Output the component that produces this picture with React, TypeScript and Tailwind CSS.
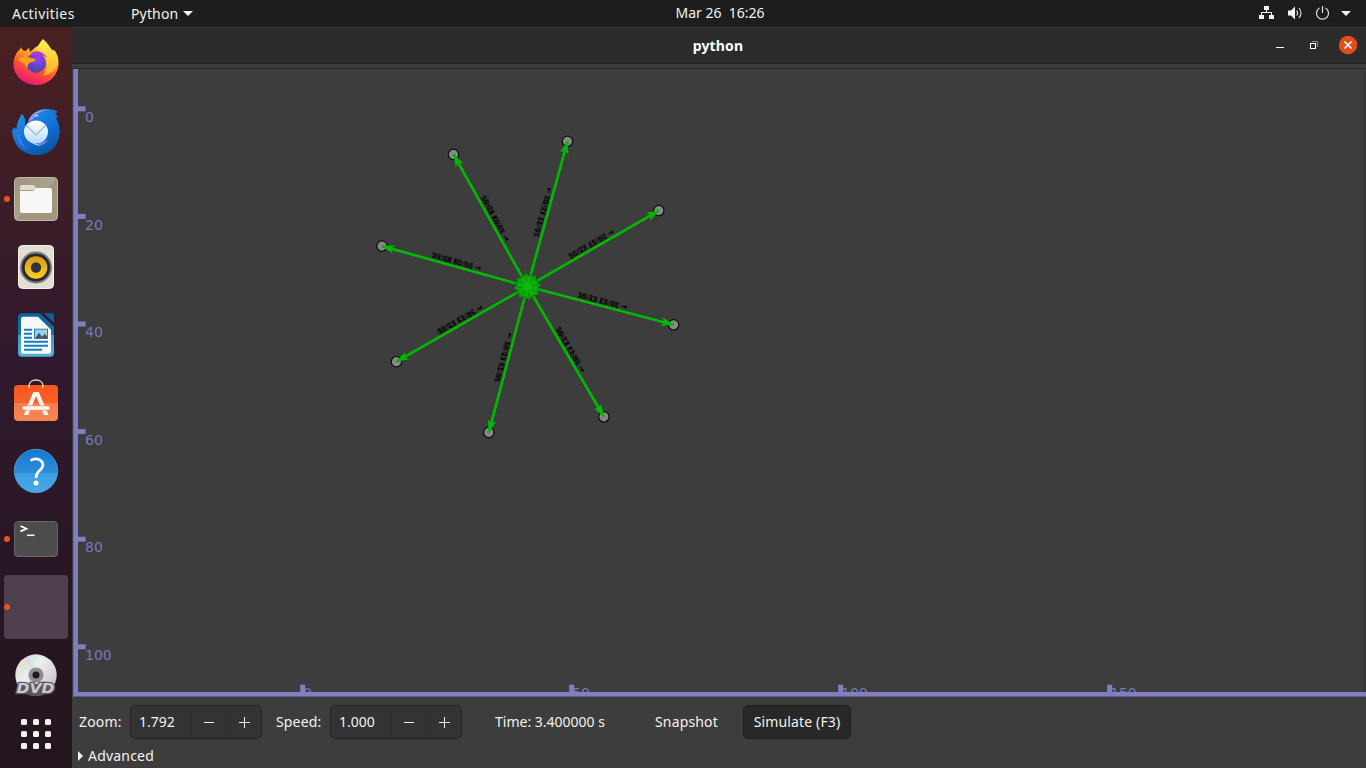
import React from "react";

const HUB = { x: 527.5, y: 286.5 };
const NODES = [
  { x: 567.5, y: 141.3, rate: "26.37 Kbit/s" },
  { x: 658.8, y: 210.6, rate: "26.37 Kbit/s" },
  { x: 673.6, y: 324.8, rate: "36.13 Kbit/s" },
  { x: 603.9, y: 416.8, rate: "36.13 Kbit/s" },
  { x: 488.8, y: 432.4, rate: "38.13 Kbit/s" },
  { x: 396.4, y: 361.7, rate: "38.13 Kbit/s" },
  { x: 382, y: 246.1, rate: "39.08 Kbit/s" },
  { x: 453.5, y: 154.4, rate: "39.08 Kbit/s" },
];
const Y_TICKS = [0, 20, 40, 60, 80, 100];
const X_TICKS = [0, 50, 100, 150];

function Link({ x, y, rate }: { x: number; y: number; rate: string }) {
  const angle = (Math.atan2(y - HUB.y, x - HUB.x) * 180) / Math.PI;
  const upright = angle > 90 ? angle - 180 : angle < -90 ? angle + 180 : angle;
  const mx = (x + HUB.x) / 2;
  const my = (y + HUB.y) / 2;
  return (
    <g>
      <g transform={`translate(${mx} ${my}) rotate(${upright})`} fontSize="7.6" fontFamily="DejaVu Sans, sans-serif" fill="#000">
        <text x={-25} y={-2.2} textLength={51} lengthAdjust="spacingAndGlyphs">{rate + " →"}</text>
        <text transform="rotate(180)" x={-26} y={7.6} textLength={51} lengthAdjust="spacingAndGlyphs">{"← " + rate}</text>
      </g>
      <line x1={HUB.x} y1={HUB.y} x2={x} y2={y} stroke="#00b800" strokeWidth="2.7" />
      <path d="M0 0L-12.5 -4.4L-9.5 0L-12.5 4.4Z" fill="#00b800" transform={`translate(${x} ${y}) rotate(${angle})`} />
    </g>
  );
}

function Topology() {
  return (
    <svg width="1294" height="634" viewBox="72 64 1294 634" className="block">
      <rect x="72" y="64" width="1294" height="634" fill="#3d3d3d" />
      <rect x="72" y="68" width="1294" height="1" fill="#292929" />
      <rect x="1364" y="69" width="1" height="623" fill="#303030" />
      {NODES.map((n) => (
        <circle key={n.x} cx={n.x} cy={n.y} r="5.2" fill="#878787" stroke="#0a0a0a" strokeWidth="1.2" />
      ))}
      {NODES.map((n) => <Link key={n.x} {...n} />)}
      {NODES.map((n) => (
        <path key={n.x} d="M0 0L12.8 -5.4L10 -0.8L13.6 0L10 0.8L12.8 5.4Z" fill="#08b008" stroke="#087808" strokeWidth="0.4"
          transform={`translate(${HUB.x} ${HUB.y}) rotate(${(Math.atan2(n.y - HUB.y, n.x - HUB.x) * 180) / Math.PI})`} />
      ))}
      <circle cx={HUB.x} cy={HUB.y} r="4.7" fill="#0abd0a" />
      <g fontFamily="DejaVu Sans, sans-serif" fontSize="14" fill="#7878ba">
        {Y_TICKS.map((v, i) => (
          <g key={v}>
            <rect x="78" y={106.3 + i * 107.6} width="7.6" height="5" fill="#8080c0" />
            <text x="85" y={122 + Math.round(i * 107.6)}>{v}</text>
          </g>
        ))}
        {X_TICKS.map((v, i) => (
          <g key={v}>
            <text x={303 + i * 269} y="698">{v}</text>
            <rect x={300.2 + i * 269} y="684.7" width="5" height="8" fill="#8080c0" />
          </g>
        ))}
      </g>
      <rect x="72" y="692" width="1294" height="6" fill="#3d3d3d" />
      <rect x="73" y="692" width="1293" height="4" fill="#8080c0" />
      <rect x="73" y="696" width="1293" height="1" fill="#5c5c86" />
      <rect x="73" y="69" width="1" height="627" fill="#6b6ba0" />
      <rect x="74" y="69" width="4" height="627" fill="#8080c0" />
    </svg>
  );
}

function Slot({ children, running, active }: { children?: React.ReactNode; running?: boolean; active?: boolean }) {
  return (
    <div className={active ? "relative flex size-16 shrink-0 items-center justify-center rounded bg-[#4e404d]" : "relative flex size-16 shrink-0 items-center justify-center"}>
      {running && <span className="absolute left-0 top-[29px] size-1.5 rounded-full bg-[#e95420]" />}
      {children}
    </div>
  );
}

function Svg({ children }: { children: React.ReactNode }) {
  return <svg width="48" height="48" viewBox="0 0 48 48">{children}</svg>;
}

function Dock() {
  return (
    <aside className="flex w-[72px] shrink-0 flex-col items-center gap-1 bg-linear-to-b from-[#4a2020] via-[#30192d] via-45% to-[#23151d] pt-1">
      <Slot>
        <Svg>
          <defs>
            <linearGradient id="fx" x1=".8" y1="0" x2=".3" y2="1"><stop offset="0" stopColor="#fff44f" /><stop offset=".35" stopColor="#ffa91f" /><stop offset=".65" stopColor="#ff4f36" /><stop offset="1" stopColor="#e5127d" /></linearGradient>
            <radialGradient id="fg" cx=".6" cy=".3"><stop offset="0" stopColor="#9940ff" /><stop offset="1" stopColor="#5a45b5" /></radialGradient>
            <linearGradient id="fy" x1="0" y1="0" x2="0" y2="1"><stop offset="0" stopColor="#fff24c" /><stop offset="1" stopColor="#ffad25" /></linearGradient>
          </defs>
          <g transform="translate(0 -1)">
            <path d="M7 13L9 9Q10 13 14 13Q15 11 17 10L18 14Q24 8 31 5L40 12L43 13Q47 19 46.5 27C45 39 36 47 24 47S2 38 1.5 27C1 21 4 15 7 12Z" fill="url(#fx)" />
            <path d="M31 1Q26 6 25 12Q30 14 33 20Q37 29 31 38Q44 35 46 23Q46 16 41 11L42 16Q37 6 31 1Z" fill="url(#fy)" />
            <circle cx="24" cy="25" r="10" fill="url(#fg)" />
            <path d="M19 15Q29 10 35 20Q29 15 26 18L20 17Z" fill="#b136dc" />
            <path d="M6 21Q11 17 23 21Q25 23 20 24Q15 25 15 31Q13 25 6 22Z" fill="#ffa020" />
          </g>
        </Svg>
      </Slot>
      <Slot>
        <Svg>
          <defs><linearGradient id="tb" x1="0" y1="0" x2=".6" y2="1"><stop offset="0" stopColor="#2099ef" /><stop offset=".6" stopColor="#1471da" /><stop offset="1" stopColor="#0757a5" /></linearGradient>
            <linearGradient id="te" x1="0" y1="0" x2="0" y2="1"><stop offset="0" stopColor="#fff" /><stop offset="1" stopColor="#b7dcfb" /></linearGradient></defs>
          <g transform="translate(0 1)">
            <path d="M16 14C18 5 27 1 34 1Q42 1 46 4L43 5L46 9L44 10C53 25 45 47 25 47C10 47 1 37 0 22L3 19L4 23Q5 12 10 6Q14 9 13 18Z" fill="url(#tb)" />
            <path d="M16 14C19 5 27 1 36 1.5Q24 4 21 11Z" fill="#a191ec" />
            <path d="M8 19C4 30 9 36 17 42Q7 37 6 29Z" fill="#7b82e4" />
            <path d="M22 8.5Q24 6 26.5 7Q26 9 22 8.5Z" fill="#d9f4ff" />
            <ellipse cx="24" cy="24" rx="12" ry="11.5" fill="url(#te)" />
            <path d="M14 17L24 27L34 17" fill="none" stroke="#9bb6c8" strokeWidth="1.2" />
            <path d="M18 34Q24 34 29 38Q24 38 20 35Z" fill="#b5dbff" />
            <path d="M22 35Q32 36 36 31Q34 37 28 37Z" fill="#6b85e7" />
          </g>
        </Svg>
      </Slot>
      <Slot running>
        <Svg>
          <defs><linearGradient id="fb" x1="0" y1="0" x2="1" y2="1"><stop offset="0" stopColor="#9f957d" /><stop offset=".5" stopColor="#aaa28d" /><stop offset=".5" stopColor="#9f967f" /><stop offset="1" stopColor="#a1967d" /></linearGradient></defs>
          <rect x="2.5" y="2.5" width="43" height="43" rx="4" fill="url(#fb)" stroke="#c1baa7" strokeWidth="1" />
          <path d="M8 13V12Q8 10 10 10H20Q23 10 24 13V15H8Z" fill="#dfdccf" />
          <path d="M8 16H20Q23 16 24 13H38Q40 13 40 15V36Q40 38 38 38H10Q8 38 8 36Z" fill="#f8f7f5" />
        </Svg>
      </Slot>
      <Slot>
        <Svg>
          <defs><linearGradient id="rb" x1="0" y1="0" x2="0" y2="1"><stop offset="0" stopColor="#d89b10" /><stop offset="1" stopColor="#ffcf25" /></linearGradient></defs>
          <rect x="6.5" y="2.5" width="35" height="43" rx="4" fill="#e2ded2" stroke="#f1eee6" />
          <circle cx="24" cy="24.5" r="15" fill="#272730" stroke="#77767b" strokeWidth="1.8" />
          <circle cx="24" cy="24.5" r="11.3" fill="url(#rb)" />
          <circle cx="24" cy="24.5" r="5.2" fill="#30343a" />
        </Svg>
      </Slot>
      <Slot>
        <Svg>
          <defs><linearGradient id="lw" x1="0" y1="0" x2="0" y2="1"><stop offset="0" stopColor="#0b649b" /><stop offset=".49" stopColor="#1572ac" /><stop offset=".5" stopColor="#3d98c8" /><stop offset="1" stopColor="#4fb5dd" /></linearGradient></defs>
          <g transform="translate(0 .7)">
            <path d="M10 1.5H28L42 15V41Q42 45 38 45H10Q6 45 6 41V5Q6 1.5 10 1.5Z" fill="url(#lw)" />
            <path d="M9 7Q9 5 11 5H26L39 18V40Q39 42 37 42H11Q9 42 9 40Z" fill="#f8f8f8" />
            <path d="M32 1.5H40Q42 1.5 42 4V11Z" fill="#0b6499" />
            <path d="M12 18H20M12 22H20M12 26H20M12 30H36M12 34H36M12 38H30" stroke="#167ebc" strokeWidth="2" />
            <rect x="22.5" y="17.5" width="13" height="9" fill="#90d1f7" stroke="#167ebc" />
            <path d="M23 27L27 21L30 25L33 22L36 27Z" fill="#4b5359" /><path d="M32 18H35V21Z" fill="#f9cb17" />
          </g>
        </Svg>
      </Slot>
      <Slot>
        <Svg>
          <defs><linearGradient id="sw" x1="0" y1="0" x2="0" y2="1"><stop offset="0" stopColor="#f6571b" /><stop offset=".5" stopColor="#f8622c" /><stop offset=".51" stopColor="#f67b4c" /><stop offset="1" stopColor="#f78654" /></linearGradient></defs>
          <rect x="2" y="6" width="44" height="36" rx="4" fill="url(#sw)" />
          <path d="M17 9V7C17-1 31-1 31 7V9" fill="none" stroke="#f5d7a5" strokeWidth="1.5" />
          <path d="M11.7 36L21.2 13H26.8L36.5 36H31.8L24 17L16.3 36Z" fill="#fff5ee" />
          <rect x="10" y="26.8" width="28" height="4.5" rx="2.2" fill="#fff5ee" stroke="#f27340" strokeWidth=".6" />
        </Svg>
      </Slot>
      <Slot>
        <Svg>
          <defs><linearGradient id="hp" x1="0" y1="0" x2="0" y2="1"><stop offset="0" stopColor="#1678d0" /><stop offset=".54" stopColor="#2b8edb" /><stop offset=".55" stopColor="#3c9ee1" /><stop offset="1" stopColor="#49a9e8" /></linearGradient></defs>
          <circle cx="24" cy="24" r="21.7" fill="url(#hp)" stroke="#5aaee7" strokeWidth=".7" />
          <path d="M18.5 13.5Q23 11 27 12.5Q31.5 14.5 30.7 19Q30 22 26.5 24.5Q24 27 24 31" fill="none" stroke="#fff" strokeWidth="2.7" /><circle cx="24" cy="36" r="2.5" fill="#fff" />
        </Svg>
      </Slot>
      <Slot running>
        <Svg>
          <rect x="2.5" y="6.5" width="43" height="35" rx="3.5" fill="#4c4c4c" stroke="#666" />
          <path d="M8.5 11L14.5 13.7L8.5 16.4" fill="none" stroke="#fff" strokeWidth="1.7" /><path d="M15 20.3H22.5" stroke="#fff" strokeWidth="1.5" />
        </Svg>
      </Slot>
      <Slot active running />
      <Slot>
        <Svg>
          <defs><linearGradient id="dv" x1="0" y1="0" x2="1" y2="1"><stop offset="0" stopColor="#e3e3e3" /><stop offset=".2" stopColor="#efdde2" /><stop offset=".3" stopColor="#d7eee2" /><stop offset=".38" stopColor="#eee" /><stop offset=".7" stopColor="#d4d4d4" /><stop offset="1" stopColor="#aaa" /></linearGradient></defs>
          <circle cx="24" cy="24" r="20.7" fill="url(#dv)" />
          <path d="M13 7L21 18L18 21L6 14Z" fill="#f2dcb9" opacity=".55" /><path d="M17 5L23 18L20 19L12 8Z" fill="#c4ddf3" opacity=".7" />
          <path d="M6 37Q12 45 24 45T42 37L40 33H8Z" fill="#5a575b" />
          <circle cx="24" cy="24" r="5.6" fill="#38363a" stroke="#8d8b8e" strokeWidth="4" /><circle cx="24" cy="24" r="3.2" fill="#201522" />
          <text x="4.5" y="41.5" textLength="38" lengthAdjust="spacingAndGlyphs" fontFamily="DejaVu Sans, sans-serif" fontWeight="bold" fontStyle="italic" fontSize="14.5" fill="#c9c8ca" stroke="#5b575c" strokeWidth="2.6" paintOrder="stroke">DVD</text>
        </Svg>
      </Slot>
      <div className="mt-2 grid grid-cols-3 gap-1.5">
        {Array.from({ length: 9 }, (_, i) => <span key={i} className="size-1.5 rounded-[1.5px] bg-[#f2f2f2]" />)}
      </div>
    </aside>
  );
}

function Spin({ value }: { value: string }) {
  return (
    <div className="flex h-[34px] w-[132px] rounded-[5px] border border-[#242424] bg-[#333]">
      <span className="flex w-[60px] items-center pl-[8px]">{value}</span>
      <span className="flex w-[35px] items-center justify-center border-l border-[#2d2d2d]"><span className="h-px w-[10px] bg-[#eee]" /></span>
      <span className="flex w-[35px] items-center justify-center border-l border-[#2d2d2d]">
        <svg width="11" height="11"><path d="M0 5.5H11M5.5 0V11" stroke="#eee" /></svg>
      </span>
    </div>
  );
}

export default function App() {
  return (
    <div className="flex h-[768px] w-[1366px] flex-col overflow-hidden bg-[#3d3d3d] font-['Noto_Sans',sans-serif] text-[14px] leading-5 text-[#f2f2f2]">
      <header className="grid h-[27px] shrink-0 grid-cols-3 items-center bg-[#1d1d1d]">
        <div className="flex items-center pl-3">
          <span className="w-[119px] tracking-[0.45px]">Activities</span>
          <span className="w-[52px] tracking-[0.15px]">Python</span>
          <svg width="10" height="5"><path d="M0 0H10L5 5Z" fill="#f2f2f2" /></svg>
        </div>
        <div className="-mt-px pl-[74px] text-center whitespace-pre">Mar 26  16:26</div>
        <div className="flex items-center justify-end pr-[15px]">
          <svg width="92" height="18" viewBox="1259 5 92 18" fill="#f2f2f2">
            <path d="M1264 6h5v4h-5zM1259 15h5v4h-5zM1269 15h5v4h-5z" />
            <path d="M1266.5 10V12.5M1261.5 15V12.5H1271.5V15" fill="none" stroke="#f2f2f2" />
            <path d="M1288 10.5h3l4-4v13l-4-4h-3z" />
            <path d="M1296.7 10.5Q1298.5 13 1296.7 15.5M1299 8Q1303 13 1299 18" fill="none" stroke="#d5d5d5" strokeWidth="1.2" />
            <path d="M1319.5 8A6 6 0 1 0 1325.5 8M1322.5 6V13" fill="none" stroke="#e2e2e2" strokeWidth="1.2" />
            <path d="M1341 11H1351L1346 16Z" />
          </svg>
        </div>
      </header>
      <div className="flex min-h-0 flex-1">
        <Dock />
        <main className="flex w-[1294px] flex-col">
          <div className="flex h-[37px] items-center border-t border-b border-t-[#3a3a3a] border-b-[#202020] bg-[#2b2b2b]">
            <div className="w-[92px]" />
            <div className="flex-1 pr-[2px] pl-[1px] text-center font-bold tracking-[0.15px] text-white">python</div>
            <div className="flex w-[93px] items-center">
              <svg width="84" height="20" viewBox="1273 36 84 20">
                <path d="M1276 47.5H1284" stroke="#fff" />
                <path d="M1312 41.5H1317.5V47" fill="none" stroke="#888" /><rect x="1310.5" y="43.5" width="5" height="5" fill="none" stroke="#fff" />
                <circle cx="1348" cy="45" r="9.2" fill="#e04e1a" /><path d="M1344.5 41.5L1351.5 48.5M1351.5 41.5L1344.5 48.5" stroke="#fff" strokeWidth="1.6" />
              </svg>
            </div>
          </div>
          <Topology />
          <div className="flex h-[48px] items-center">
            <span className="w-[58px] pl-[7px] tracking-[0.15px]">Zoom:</span>
            <Spin value="1.792" />
            <span className="w-[68px] pl-[14px] tracking-[0.15px]">Speed:</span>
            <Spin value="1.000" />
            <span className="w-[160px] pl-[33px]">Time: 3.400000 s</span>
            <span className="w-[121px] pl-[33px] tracking-[0.15px]">Snapshot</span>
            <button className="h-[34px] w-[108px] rounded-[5px] border border-[#1f1f1f] bg-[#282828] tracking-[0.15px]">Simulate (F3)</button>
          </div>
          <div className="flex items-center pl-[6px]">
            <svg width="5" height="10"><path d="M0 0L5 5L0 10Z" fill="#f2f2f2" /></svg>
            <span className="pl-[5px] tracking-[0.2px]">Advanced</span>
          </div>
        </main>
      </div>
    </div>
  );
}
